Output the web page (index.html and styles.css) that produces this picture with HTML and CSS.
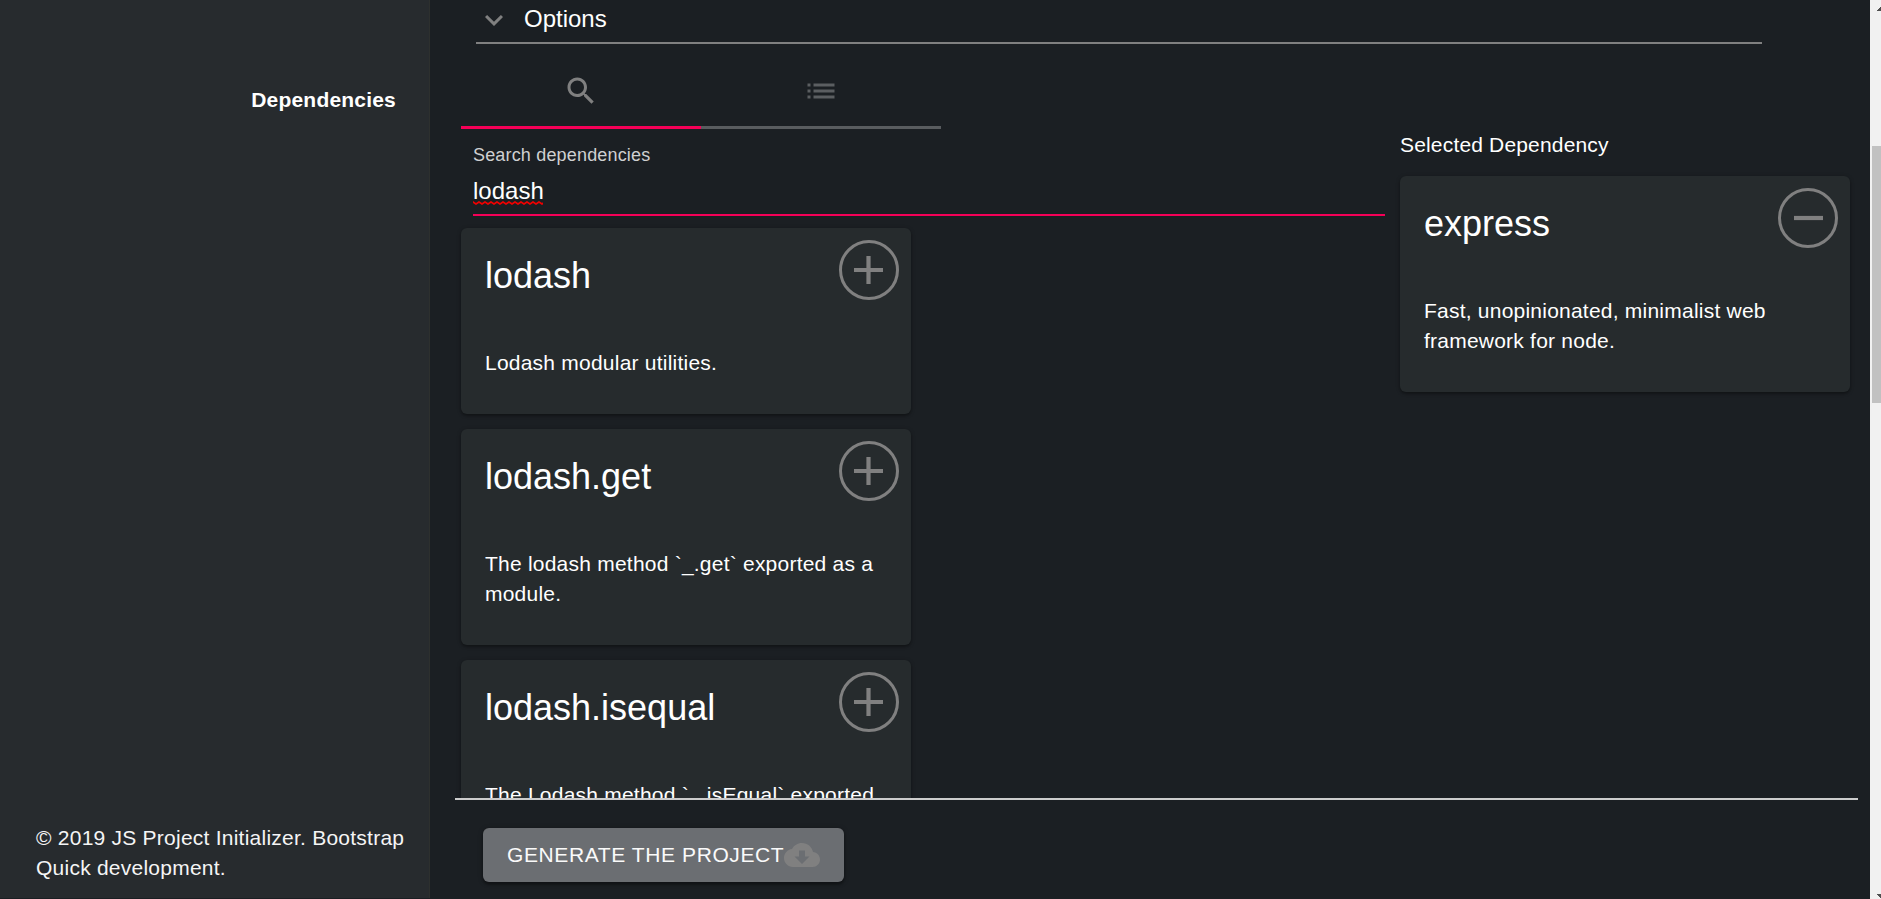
FILE: index.html
```html
<!DOCTYPE html>
<html lang="en">
<head>
<meta charset="utf-8">
<title>JS Project Initializer</title>
<link rel="stylesheet" href="styles.css">
</head>
<body>
<div class="app">
  <aside class="sidebar">
    <div class="side-title">Dependencies</div>
    <div class="copyright">© 2019 JS Project Initializer. Bootstrap Quick development.</div>
  </aside>
  <main class="main">
    <div class="content">
      <div class="options">
        <svg class="icon" viewBox="0 0 24 24"><path d="M16.59 8.59 12 13.17 7.41 8.59 6 10l6 6 6-6z"/></svg>
        <span>Options</span>
      </div>
      <div class="columns">
        <section class="search">
          <div class="tabs">
            <div class="tab active"><svg class="icon" viewBox="0 0 24 24"><path d="M15.5 14h-.79l-.28-.27C15.41 12.59 16 11.11 16 9.5 16 5.91 13.09 3 9.5 3S3 5.91 3 9.5 5.91 16 9.5 16c1.61 0 3.09-.59 4.23-1.57l.27.28v.79l5 4.99L20.49 19l-4.99-5zm-6 0C7.01 14 5 11.99 5 9.5S7.01 5 9.5 5 14 7.01 14 9.5 11.99 14 9.5 14z"/></svg></div>
            <div class="tab"><svg class="icon" viewBox="0 0 24 24"><path d="M3 13h2v-2H3v2zm0 4h2v-2H3v2zm0-8h2V7H3v2zm4 4h14v-2H7v2zm0 4h14v-2H7v2zM7 7v2h14V7H7z"/></svg></div>
          </div>
          <div class="field">
            <div class="label">Search dependencies</div>
            <div class="value"><span class="typed">lodash<svg class="squiggle" width="70" height="4"><defs><pattern id="wave" width="6" height="4" patternUnits="userSpaceOnUse"><path d="M-1 1.8 0 1l3 2 3-2 1 .7" fill="none" stroke="#f00000" stroke-width="1.7"/></pattern></defs><rect width="70" height="4" fill="url(#wave)"/></svg></span></div>
          </div>
          <article class="card">
            <h2>lodash</h2>
            <p>Lodash modular utilities.</p>
            <svg class="round" viewBox="0 0 60 60"><circle cx="30" cy="30" r="28.5"/><path d="M15 30h29M29.5 16v28"/></svg>
          </article>
          <article class="card">
            <h2>lodash.get</h2>
            <p>The lodash method `_.get` exported as a module.</p>
            <svg class="round" viewBox="0 0 60 60"><circle cx="30" cy="30" r="28.5"/><path d="M15 30h29M29.5 16v28"/></svg>
          </article>
          <article class="card">
            <h2>lodash.isequal</h2>
            <p>The Lodash method `_.isEqual` exported as a module.</p>
            <svg class="round" viewBox="0 0 60 60"><circle cx="30" cy="30" r="28.5"/><path d="M15 30h29M29.5 16v28"/></svg>
          </article>
        </section>
        <section class="selected">
          <div class="selected-title">Selected Dependency</div>
          <article class="card">
            <h2>express</h2>
            <p>Fast, unopinionated, minimalist web framework for node.</p>
            <svg class="round" viewBox="0 0 60 60"><circle cx="30" cy="30" r="28.5"/><path d="M16 30h29"/></svg>
          </article>
        </section>
      </div>
    </div>
    <footer class="footer">
      <div class="generate"><span>GENERATE THE PROJECT</span><svg class="icon" viewBox="0 0 24 24"><path d="M19.35 10.04C18.67 6.59 15.64 4 12 4 9.11 4 6.6 5.64 5.35 8.04 2.34 8.36 0 10.91 0 14c0 3.31 2.69 6 6 6h13c2.76 0 5-2.24 5-5 0-2.64-2.05-4.78-4.65-4.96zM17 13l-5 5-5-5h3V9h4v4h3z"/></svg></div>
    </footer>
  </main>
  <div class="scrollbar">
    <svg class="arrow" viewBox="0 0 11 12"><path d="M7 11V10h1V9h1V8h1V7h1v4z"/></svg>
    <div class="thumb"></div>
    <svg class="arrow down" viewBox="0 0 11 12"><path d="M7 7v1h1v1h1v1h1v1h1V7z"/></svg>
  </div>
</div>
</body>
</html>
```
FILE: styles.css
```css
* { box-sizing: border-box; }
body {
  margin: 0;
  height: 899px;
  overflow: hidden;
  background: #1b1f23;
  color: #fff;
  font: 21px/30px "Liberation Sans", Arial, sans-serif;
  letter-spacing: 0.225px;
}
.app { display: flex; height: 899px; }
.icon { width: 36px; height: 36px; fill: #808080; flex: none; display: block; }

.sidebar {
  width: 430px;
  height: 898px;
  flex: none;
  display: flex;
  flex-direction: column;
  justify-content: space-between;
  padding: 85px 0 15px;
  background: #272b2e;
  border-right: 1px solid #2d302e;
}
.side-title { font-weight: 700; text-align: right; padding-right: 33px; letter-spacing: 0.2px; }
.copyright { padding: 0 20px 0 36px; color: #f5f5f5; letter-spacing: 0.24px; }

.main { width: 1440px; flex: none; display: flex; flex-direction: column; padding: 0 12px 0 25px; }
.content { height: 798px; flex: none; overflow: hidden; padding-left: 6px; }
.options {
  display: flex;
  gap: 12px;
  width: 1286px;
  height: 44px;
  margin-left: 15px;
  padding-top: 1px;
  border-bottom: 2px solid #808080;
  font-size: 24px;
  line-height: 36px;
  letter-spacing: 0;
}
.options .icon { margin-top: 1px; }
.columns { display: flex; gap: 15px; }
.search { width: 924px; flex: none; }
.tabs { display: flex; width: 480px; margin-top: 10px; height: 75px; }
.tab { flex: 1; padding-top: 19px; display: flex; justify-content: center; align-items: flex-start; border-bottom: 3px solid #595c5f; }
.tab.active { border-color: #f50057; }
.tab:not(.active) .icon { fill: #5b5e61; }
.field { margin: 0 0 12px 12px; height: 87px; border-bottom: 2px solid #f50057; padding-top: 14px; }
.label { font-size: 18px; line-height: 24px; letter-spacing: 0.17px; color: #cfd0d1; }
.value { font-size: 24px; line-height: 30px; letter-spacing: 0; margin-top: 9px; }
.typed { position: relative; }
.squiggle { position: absolute; left: 0; bottom: -1px; }

.card {
  position: relative;
  width: 450px;
  padding: 24px 24px 36px;
  margin-bottom: 15px;
  background: #262b2d;
  border-radius: 6px;
  box-shadow: 0 1px 4px rgba(0,0,0,.3), 0 2px 2px rgba(0,0,0,.16);
}
.card h2 { margin: 0 0 48px; font-size: 36px; line-height: 48px; font-weight: 400; letter-spacing: 0; }
.card p { margin: 0; }
.round { position: absolute; top: 12px; right: 12px; width: 60px; height: 60px; fill: none; stroke: #808080; }
.round circle { stroke-width: 3; }
.round path { stroke-width: 4.2; }
.selected { width: 450px; padding-top: 86px; }
.selected-title { margin-bottom: 16px; letter-spacing: 0.17px; }

.footer { flex: 1; border-top: 2px solid #ccc; padding: 28px 0 0 28px; display: flex; align-items: flex-start; }
.generate {
  display: flex;
  align-items: center;
  width: 361px;
  height: 54px;
  padding-left: 24px;
  border-radius: 6px;
  background: #6b6e72;
  color: #fafafa;
  letter-spacing: 0.6px;
  box-shadow: 0 1px 5px rgba(0,0,0,.4), 0 3px 2px rgba(0,0,0,.2);
}
.generate span { width: 277px; white-space: nowrap; }
.scrollbar { width: 11px; flex: none; background: #f1f1f1; display: flex; flex-direction: column; }
.arrow { width: 11px; height: 12px; fill: #505050; flex: none; }
.thumb { margin: 134px 0 auto 2px; height: 257px; background: #c1c1c1; }
```
